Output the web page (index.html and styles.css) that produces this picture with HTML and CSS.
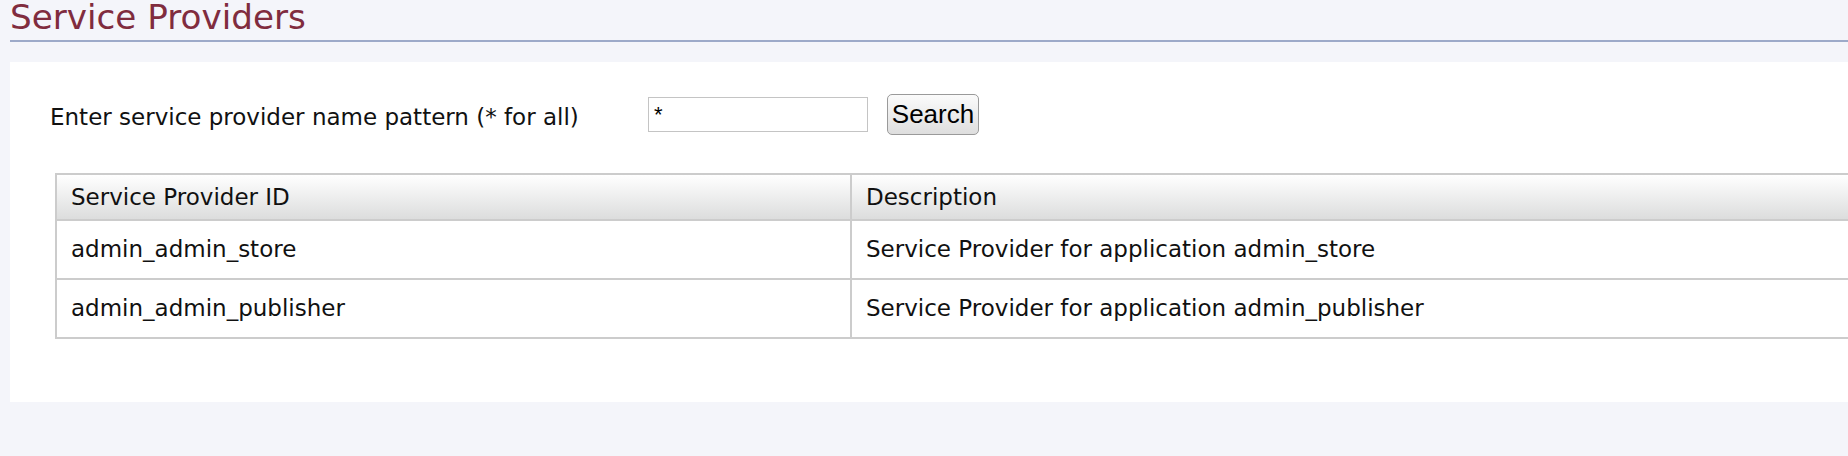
FILE: index.html
```html
<!DOCTYPE html>
<html lang="en">
<head>
<meta charset="utf-8">
<title>Service Providers</title>
<link rel="stylesheet" href="styles.css">
</head>
<body>
<div class="page">
  <h2 class="page-title">Service Providers</h2>
  <div class="panel">
    <form class="search-row" onsubmit="return false;">
      <label class="search-label" for="spName">Enter service provider name pattern (* for all)</label>
      <input class="search-input" id="spName" type="text" value="*">
      <button class="search-button" type="submit">Search</button>
    </form>
    <table class="sp-table">
      <thead>
        <tr>
          <th class="col-id">Service Provider ID</th>
          <th class="col-desc">Description</th>
        </tr>
      </thead>
      <tbody>
        <tr>
          <td>admin_admin_store</td>
          <td>Service Provider for application admin_store</td>
        </tr>
        <tr>
          <td>admin_admin_publisher</td>
          <td>Service Provider for application admin_publisher</td>
        </tr>
      </tbody>
    </table>
  </div>
</div>
</body>
</html>
```
FILE: styles.css
```css
html, body {
  margin: 0;
  padding: 0;
  background: #f4f5fa;
  overflow: hidden;
}

.page {
  padding-left: 10px;
  font-family: "DejaVu Sans", Verdana, sans-serif;
  color: #111;
}

.page-title {
  margin: 0;
  padding-bottom: 6px;
  border-bottom: 2px solid #9daac9;
  font-family: "DejaVu Sans", Verdana, sans-serif;
  font-weight: normal;
  font-size: 34.2px;
  line-height: 34px;
  color: #802c3e;
}

.panel {
  margin-top: 20px;
  background: #ffffff;
  padding: 32px 0 63px 40px;
  overflow: hidden;
}

.search-row {
  display: flex;
  align-items: center;
  margin: 0;
  height: 41px;
}

.search-label {
  width: 598px;
  flex: none;
  font-size: 23px;
  margin-top: 5px;
}

.search-input {
  box-sizing: border-box;
  width: 220px;
  height: 35px;
  margin: 0 19px 0 0;
  padding: 0 5px;
  border: 1px solid #c4c4c4;
  font-family: "Liberation Sans", Arial, sans-serif;
  font-size: 22px;
  color: #000;
  background: #fff;
}

.search-button {
  box-sizing: border-box;
  width: 92px;
  height: 41px;
  margin: 0;
  padding: 0 3px;
  border: 1px solid #9a9a9a;
  border-radius: 5px;
  background: linear-gradient(#fbfbfb, #dedede);
  font-family: "Liberation Sans", Arial, sans-serif;
  font-size: 26px;
  color: #000;
}

.sp-table {
  margin: 38px 0 0 5px;
  border-collapse: separate;
  border-spacing: 0;
  border-top: 2px solid #cccccc;
  border-left: 2px solid #cccccc;
  font-size: 23px;
  table-layout: fixed;
  width: 2100px;
}

.sp-table th,
.sp-table td {
  padding: 0 14px;
  border-right: 2px solid #cccccc;
  border-bottom: 2px solid #cccccc;
  text-align: left;
  font-weight: normal;
  white-space: nowrap;
}

.sp-table th {
  line-height: 44px;
  background: linear-gradient(#ffffff, #dcdddd);
}

.sp-table td {
  line-height: 57px;
}

.col-id {
  width: 765px;
}
```
